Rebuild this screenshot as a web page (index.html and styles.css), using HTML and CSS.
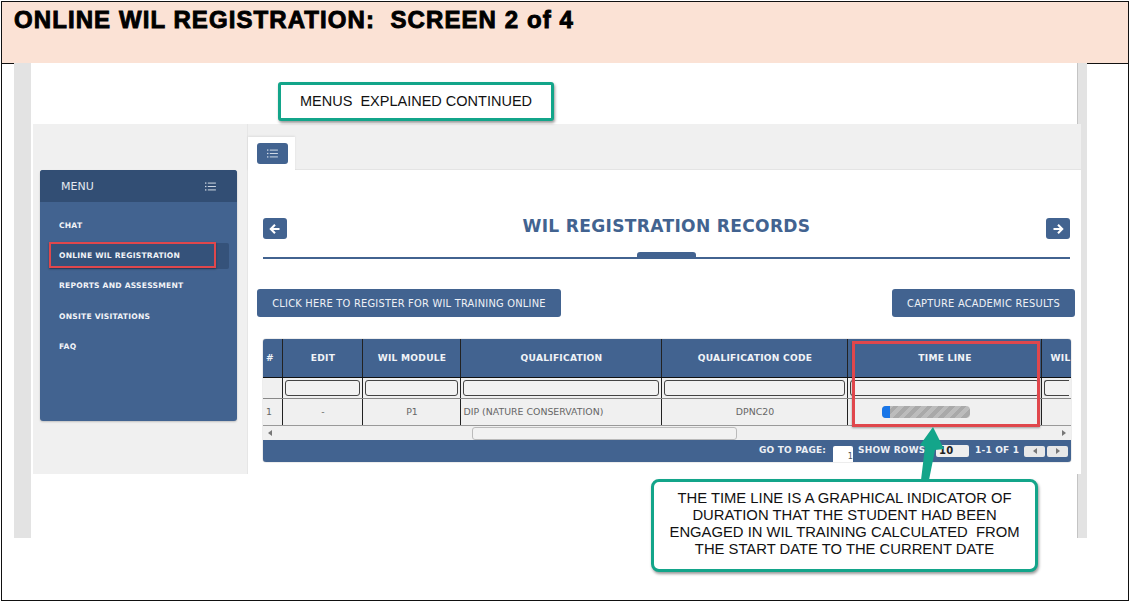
FILE: index.html
```html
<!DOCTYPE html>
<html lang="en">
<head>
<meta charset="utf-8">
<title>Online WIL Registration: Screen 2 of 4</title>
<link rel="stylesheet" href="styles.css">
</head>
<body>
<svg class="defs" width="0" height="0" aria-hidden="true">
  <symbol id="list" viewBox="0 0 12 10">
    <rect x="0" y="0.5" width="1.4" height="1.4" fill="currentColor"/><rect x="3" y="0.7" width="9" height="1" fill="currentColor"/>
    <rect x="0" y="4.3" width="1.4" height="1.4" fill="currentColor"/><rect x="3" y="4.5" width="9" height="1" fill="currentColor"/>
    <rect x="0" y="8.1" width="1.4" height="1.4" fill="currentColor"/><rect x="3" y="8.3" width="9" height="1" fill="currentColor"/>
  </symbol>
  <symbol id="arrow-left" viewBox="0 0 12 12">
    <path d="M10.5 6H2M6 1.8 1.8 6 6 10.2" fill="none" stroke="currentColor" stroke-width="2.1"/>
  </symbol>
  <symbol id="arrow-right" viewBox="0 0 12 12">
    <path d="M1.5 6H10M6 1.8 10.2 6 6 10.2" fill="none" stroke="currentColor" stroke-width="2.1"/>
  </symbol>
</svg>
<div class="slide">
  <header class="slide-head"><h1 class="slide-title">ONLINE WIL REGISTRATION:&nbsp; SCREEN 2 of 4</h1></header>
  <div class="stage">
    <div class="work">
      <div class="gutter gutter-left"></div>
      <div class="shot">
        <div class="app">
          <aside class="side">
            <nav class="menu">
              <div class="menu-head"><span>MENU</span><svg class="icon-list"><use href="#list"/></svg></div>
              <ul class="menu-list">
                <li class="menu-item">CHAT</li>
                <li class="menu-item menu-active">ONLINE WIL REGISTRATION</li>
                <li class="menu-item">REPORTS AND ASSESSMENT</li>
                <li class="menu-item">ONSITE VISITATIONS</li>
                <li class="menu-item">FAQ</li>
              </ul>
            </nav>
          </aside>
          <main class="main">
            <div class="tabs"><div class="tab"><span class="tab-btn"><svg class="icon-list"><use href="#list"/></svg></span></div></div>
            <div class="content">
              <div class="title-row">
                <span class="nav-btn"><svg class="icon-arrow"><use href="#arrow-left"/></svg></span>
                <h2 class="page-title">WIL REGISTRATION RECORDS</h2>
                <span class="nav-btn"><svg class="icon-arrow"><use href="#arrow-right"/></svg></span>
              </div>
              <div class="rule"><span class="rule-notch"></span></div>
              <div class="actions">
                <span class="action">CLICK HERE TO REGISTER FOR WIL TRAINING ONLINE</span>
                <span class="action action-small">CAPTURE ACADEMIC RESULTS</span>
              </div>
              <div class="grid-wrap">
                <table class="grid">
                  <colgroup>
                    <col class="c-num"><col class="c-edit"><col class="c-mod"><col class="c-qual"><col class="c-code"><col class="c-time"><col class="c-wil">
                  </colgroup>
                  <thead>
                    <tr class="r-head">
                      <th class="left">#</th><th>EDIT</th><th>WIL MODULE</th><th>QUALIFICATION</th><th>QUALIFICATION CODE</th><th>TIME LINE</th><th class="clip">WIL</th>
                    </tr>
                    <tr class="r-filter">
                      <td></td>
                      <td><span class="filter"></span></td>
                      <td><span class="filter"></span></td>
                      <td><span class="filter"></span></td>
                      <td><span class="filter"></span></td>
                      <td><span class="filter"></span></td>
                      <td><span class="filter filter-open"></span></td>
                    </tr>
                  </thead>
                  <tbody>
                    <tr class="r-data">
                      <td class="left">1</td><td>-</td><td>P1</td><td class="left">DIP (NATURE CONSERVATION)</td><td>DPNC20</td>
                      <td class="left"><div class="progress"><div class="progress-fill"></div></div></td><td></td>
                    </tr>
                  </tbody>
                </table>
                <div class="hscroll">
                  <span class="tri tri-l"></span>
                  <span class="thumb"></span>
                  <span class="tri tri-r"></span>
                </div>
                <div class="pager">
                  <span class="go-page">GO TO PAGE:</span>
                  <span class="page-input">1</span>
                  <span class="show-rows">SHOW ROWS:</span>
                  <span class="rows-select">10</span>
                  <span class="count">1-1 OF 1</span>
                  <span class="page-btn"><span class="tri tri-l"></span></span>
                  <span class="page-btn"><span class="tri tri-r"></span></span>
                </div>
              </div>
            </div>
          </main>
        </div>
      </div>
      <div class="gutter gutter-right"></div>
    </div>
  </div>

  <div class="callout callout-top">MENUS&nbsp; EXPLAINED CONTINUED</div>
  <div class="callout callout-bottom">THE TIME LINE IS A GRAPHICAL INDICATOR OF<br>DURATION THAT THE STUDENT HAD BEEN<br>ENGAGED IN WIL TRAINING CALCULATED&nbsp; FROM<br>THE START DATE TO THE CURRENT DATE</div>
  <div class="mark mark-menu"></div>
  <div class="mark mark-time"></div>
  <svg class="pointer" viewBox="0 0 30 54" aria-hidden="true"><polygon points="15,1 26,23 17,24 11,54 3,54 7,21 2,19"/></svg>
</div>
</body>
</html>
```
FILE: styles.css
```css
* { box-sizing: border-box; }
html, body { margin: 0; padding: 0; background: #fff; }
body { padding: 1px 0 0 1px; width: 1132px; height: 607px; overflow: hidden; }
.defs { position: absolute; }

.slide {
  position: relative;
  width: 1128px;
  height: 600px;
  border: 1px solid #111;
  background: #fff;
  font-family: "DejaVu Sans", sans-serif;
  display: flex;
  flex-direction: column;
}
.slide-head { height: 61px; flex: none; background: #fbe2d5; padding: 5px 0 0 12px; position: relative; z-index: 2; }
.slide-title {
  margin: 0;
  font: 700 24px/26px "Liberation Sans", Arial, sans-serif;
  letter-spacing: 1.08px;
  color: #000;
  -webkit-text-stroke: 0.9px #000;
  white-space: pre;
}
.stage { flex: 1; border-top: 1px solid #111; }
.work { display: flex; margin: -1px 0 0 12px; width: 1073px; height: 475px; position: relative; z-index: 1; }
.gutter { flex: none; background: #e3e3e3; }
.gutter-left { width: 17px; }
.gutter-right { width: 9px; }
.shot { flex: 1; min-width: 0; background: #fff; padding: 61px 0 0 2px; border-right: 1px solid #c4c4c4; }

.app { position: relative; z-index: 1; display: flex; height: 350px; width: 1048px; background: #f0f0f0; }
.side { flex: none; width: 215px; padding: 46px 0 0 7px; border-right: 1px solid #e6e6e6; }
.menu { width: 197px; height: 251px; background: #426390; border-radius: 3px; overflow: hidden; color: #fff; box-shadow: 0 1px 2px rgba(0,0,0,.2); }
.menu-head { height: 32px; background: #324e74; display: flex; align-items: center; justify-content: space-between; padding: 0 21px 0 21px; font-size: 11px; color: #e4e9f0; }
.icon-list { width: 11px; height: 9px; display: block; color: #dfe6ef; }
.menu-list { list-style: none; margin: 0; padding: 8px 8px 0 9px; }
.menu-item { height: 30.5px; display: flex; align-items: center; padding-left: 10px; font-size: 7.6px; font-weight: 700; letter-spacing: .22px; color: #f2f4f8; }
.menu-active { height: 26px; margin: 2px 0; background: #35527a; border-radius: 2px; }

.main { flex: 1; min-width: 0; display: flex; flex-direction: column; }
.tabs { height: 46px; flex: none; padding-top: 13px; border-bottom: 1px solid #e4e4e4; }
.tab { width: 47px; height: 34px; background: #fff; padding: 6px 0 0 9px; box-shadow: 0 -1px 2px rgba(0,0,0,.08); }
.tab-btn { width: 31px; height: 21px; background: #426390; border-radius: 3px; display: flex; align-items: center; justify-content: center; }
.content { flex: 1; background: #fff; padding: 48px 0 0 0; }
.title-row { display: flex; align-items: center; justify-content: space-between; margin: 0 11px 0 15px; height: 21px; }
.nav-btn { width: 24px; height: 21px; background: #426390; border-radius: 3px; display: flex; align-items: center; justify-content: center; color: #fff; }
.icon-arrow { width: 12px; height: 12px; display: block; }
.page-title { margin: -5px 0 0; font-size: 17.1px; line-height: 21px; font-weight: 700; letter-spacing: .3px; color: #426390; text-align: center; }
.rule { position: relative; margin: 18px 11px 0 15px; height: 2px; background: #426390; }
.rule-notch { position: absolute; left: 374px; top: -5px; width: 59px; height: 6px; background: #426390; border-radius: 3px 3px 0 0; }
.actions { display: flex; justify-content: space-between; margin: 30px 6px 0 9px; }
.action { height: 28px; width: 304px; background: #426390; border-radius: 3px; color: #eef1f6; font-size: 9.9px; display: flex; align-items: center; justify-content: center; letter-spacing: .22px; }
.action-small { width: 183px; }

.grid-wrap { width: 808px; margin: 22px 0 0 15px; border-radius: 3px; overflow: hidden; background: #f0f0f0; box-shadow: 0 0 1px rgba(0,0,0,.7); }
.grid { border-collapse: collapse; table-layout: fixed; width: 808px; font-size: 9.4px; color: #666; }
.c-num { width: 19px; } .c-edit { width: 80px; } .c-mod { width: 98px; } .c-qual { width: 201px; } .c-code { width: 186px; } .c-time { width: 194px; } .c-wil { width: 30px; }
.grid th, .grid td { padding: 0 0 0 2px; border-right: 1px solid #222; text-align: center; overflow: hidden; white-space: nowrap; }
.grid th:last-child, .grid td:last-child { border-right: 0; }
.grid th { background: #426390; color: #f0f3f7; font-size: 9.1px; font-weight: 700; letter-spacing: .25px; border-bottom: 1px solid #111; }
.r-head { height: 38px; }
.r-filter { height: 21px; }
.grid .r-filter td { padding: 0 2px; border-bottom: 1px solid #888; background: #f0f0f0; }
.r-data { height: 27px; }
.r-data td { background: #f0f0f0; border-bottom: 1px solid #999; }
.grid .left { text-align: left; padding-left: 3px; }
.grid .clip { text-align: left; padding-left: 9px; }
.filter { display: block; height: 16px; border: 1px solid #444; border-radius: 3px; background: #f2f2f2; }
.filter-open { border-right: 0; border-radius: 3px 0 0 3px; }
.progress { margin-left: 31px; width: 88px; height: 12px; border-radius: 4px; overflow: hidden; background: repeating-linear-gradient(135deg, #a9a9a9 0 4px, #bcbcbc 4px 8px); }
.progress-fill { width: 8px; height: 100%; background: #1976e8; }

.hscroll { position: relative; height: 14px; background: #f0f0f0; display: flex; align-items: center; justify-content: space-between; padding: 0 5px; }
.thumb { position: absolute; left: 209px; top: 1px; width: 265px; height: 13px; background: #f2f2f2; border: 1px solid #bbb; border-radius: 3px; }
.tri { display: block; width: 0; height: 0; border-top: 3px solid transparent; border-bottom: 3px solid transparent; }
.tri-l { border-right: 4px solid #777; }
.tri-r { border-left: 4px solid #777; }

.pager { height: 22px; background: #426390; color: #edf0f5; font-size: 9px; font-weight: 700; letter-spacing: .2px; display: flex; align-items: flex-start; padding: 5px 0 0 496px; line-height: 11px; white-space: nowrap; }
.pager > * { flex: none; }
.go-page { width: 68px; }
.page-input { width: 20px; height: 17px; margin: 1px 0 0 6px; background: #fff; border-radius: 2px 2px 0 0; color: #555; font-weight: 400; text-align: right; padding: 5px 0 0; font-size: 8px; }
.show-rows { width: 78px; margin-left: 5px; }
.rows-select { width: 33px; height: 12px; background: #eee; color: #222; border-radius: 2px; padding-left: 3px; font-size: 10px; }
.count { margin-left: 6px; width: 44px; }
.page-btn { width: 21px; height: 11px; margin: 1px 0 0 2px; background: #e8e8e8; border-radius: 2px; display: flex; align-items: center; justify-content: center; }
.count + .page-btn { margin-left: 5px; }

.callout { position: absolute; z-index: 5; background: #fff; border: 3px solid #13a58a; color: #111; font-family: "Liberation Sans", Arial, sans-serif; box-shadow: 1px 2px 3px rgba(0,0,0,.4); }
.callout-top { left: 276px; top: 80px; width: 276px; height: 39px; border-radius: 3px; font-size: 14.5px; line-height: 33px; padding-left: 19px; white-space: nowrap; }
.callout-bottom { left: 649px; top: 477px; width: 387px; height: 93px; border-radius: 8px; font-size: 14.8px; line-height: 17px; text-align: center; padding-top: 8px; white-space: nowrap; }
.mark { position: absolute; z-index: 4; border: 3px solid #e0474c; box-shadow: 0 1px 2px rgba(0,0,0,.35); }
.mark-menu { left: 47px; top: 240px; width: 167px; height: 26px; border-width: 2px; }
.mark-time { left: 850px; top: 339px; width: 188px; height: 86px; }
.pointer { position: absolute; z-index: 6; left: 916px; top: 424px; width: 30px; height: 54px; }
.pointer polygon { fill: #13a58a; }
```
